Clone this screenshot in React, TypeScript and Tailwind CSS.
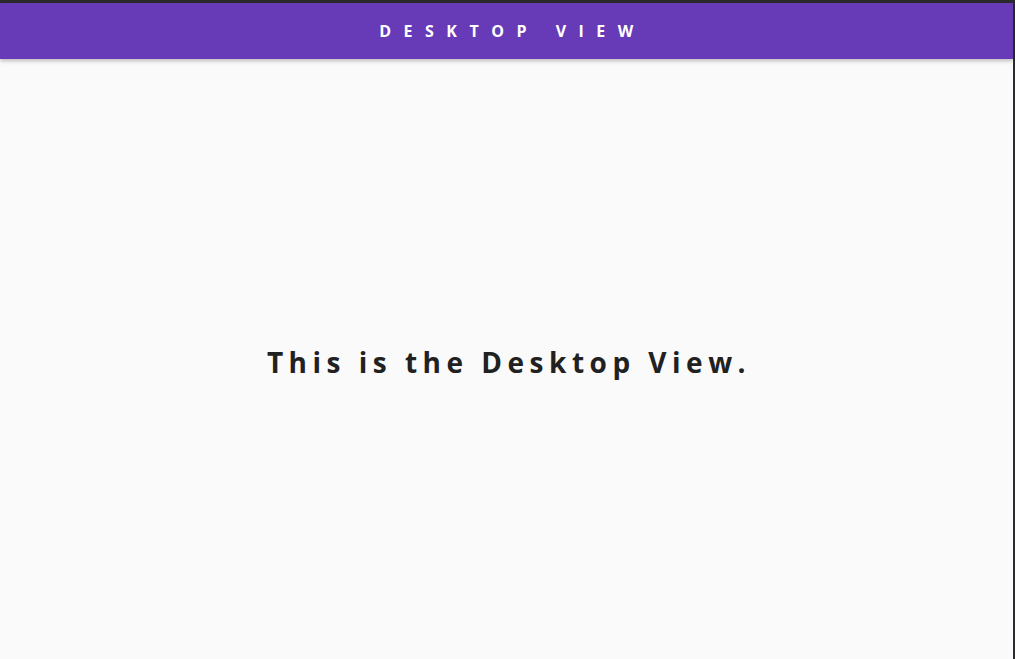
export default function App() {
  return (
    <div
      className="flex h-[659px] w-[1015px] flex-col border-t-[3px] border-r-2 border-[#2b2a2c] bg-[#fafafa]"
      style={{ fontFamily: "'Open Sans', 'Noto Sans', sans-serif" }}
    >
      <header className="relative z-10 flex h-[56px] shrink-0 items-center justify-center bg-[#673ab7] shadow-[0_2px_4px_rgba(0,0,0,0.25)]">
        <h1 className="pl-[12px] text-[16px] font-bold tracking-[12.5px] text-white">DESKTOP VIEW</h1>
      </header>
      <main className="flex flex-1 items-center justify-center">
        <p className="mt-[6px] pl-[5px] text-[28px] font-bold tracking-[5.5px] text-[#212121]">
          This is the Desktop View.
        </p>
      </main>
    </div>
  );
}
